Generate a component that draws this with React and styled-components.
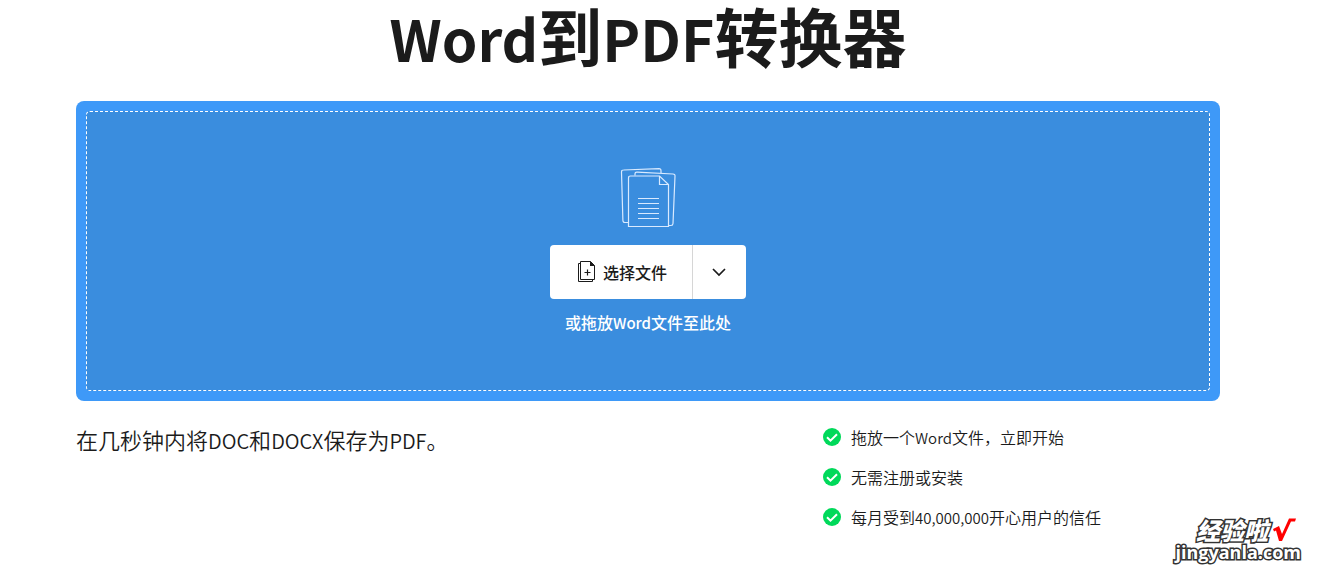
import styled, {createGlobalStyle} from "styled-components";

const GlobalStyle = createGlobalStyle`
	* {
		box-sizing: border-box;
	}

	body {
		margin: 0;
		background: #fff;
		color: #1b1b1b;
		font-family: "Noto Sans CJK SC", "Noto Sans", sans-serif;
	}
`

const Page = styled.main`
	padding: 0 97px 0 76px;
`

const Title = styled.h1`
	margin: 0 0 32px;
	font-size: 64px;
	font-weight: 700;
	line-height: 69px;
	text-align: center;
`

const Latin = styled.span`
	font-size: ${({$size}) => $size}px;
	line-height: 1;
`

const DropZone = styled.section`
	padding: 10px;
	border-radius: 8px;
	background: #3e99f8;
`

const DropArea = styled.div`
	display: flex;
	flex-direction: column;
	align-items: center;
	padding: 56px 16px;
	border: 1px dashed #fff;
	border-radius: 4px;
	background: #3a8dde;
`

const ButtonGroup = styled.div`
	display: flex;
	margin: 17px 0 11px;
	border-radius: 4px;
	background: #fff;
	overflow: hidden;
`

const Button = styled.button`
	display: flex;
	align-items: center;
	justify-content: center;
	gap: 6px;
	height: 54px;
	padding: 0 ${({$compact}) => $compact ? 16 : 25}px;
	border: 0;
	border-left: ${({$compact}) => $compact ? '1px solid #d6d6d6' : '0'};
	background: transparent;
	color: #1b1b1b;
	font-family: inherit;
	font-size: 16px;
	font-weight: 500;
	cursor: pointer;
`

const Hint = styled.p`
	margin: 0;
	color: #fff;
	font-size: 16px;
	font-weight: 500;
	line-height: 24px;
`

const Details = styled.section`
	display: grid;
	grid-template-columns: 747px 1fr;
	padding-top: 24px;
`

const Lead = styled.p`
	margin: 0;
	font-size: 22px;
	font-weight: 350;
	line-height: 28px;
`

const Benefits = styled.ul`
	display: flex;
	flex-direction: column;
	gap: 16px;
	margin: 0;
	padding: 0;
	list-style: none;
`

const Benefit = styled.li`
	display: flex;
	align-items: center;
	gap: 10px;
	font-size: 16px;
	font-weight: 350;
	line-height: 24px;
`

const Watermark = styled.div`
	position: absolute;
	right: 16px;
	bottom: 8px;
	display: flex;
	flex-direction: column;
	align-items: flex-end;
	color: #fff;
	font-weight: 900;
	-webkit-text-stroke: 3px #333;
	paint-order: stroke fill;
`

const WatermarkName = styled.span`
	display: flex;
	align-items: center;
	gap: 4px;
	padding-right: 5px;
	font-size: 24px;
	font-style: italic;
	line-height: 24px;
`

const WatermarkSite = styled.span`
	font-family: "Open Sans", sans-serif;
	font-size: 18px;
	font-weight: 700;
	line-height: 20px;
`

const DocumentsIcon = () => (
	<svg width="56" height="60" viewBox="0 0 56 60" fill="none" stroke="#d9eaff" strokeWidth="1.2" aria-hidden="true">
		<path d="M8.500 54.500H5q-2 0-2.100-2L1.500 4q0-2 2-2L39 .7q2 0 2 2V5"/>
		<path d="M15 7.500V6q.1-2 2-1.900L53 6q2.200.1 2 2l-2 47.500q-.1 2-2 2h-3"/>
		<path d="M39.500 8H10.500q-2 0-2 2v48.500h40V16.500z"/>
		<path d="M39.500 8v8.500h9"/>
		<path d="M18 30.500h21M18 35.500h21M18 40.500h21M18 45.500h21M18 50.500h21" strokeWidth="1.200"/>
	</svg>
)

const AddFileIcon = () => (
	<svg width="22" height="22" viewBox="0 0 22 22" fill="none" stroke="#1b1b1b" strokeWidth="1" aria-hidden="true">
		<path d="M5.500 .5h10l4 4v14H5.500z"/>
		<path d="M5.500 2.500h-2v18h14v-2"/>
		<path d="M15 0v5h5z" fill="#1b1b1b" stroke="none"/>
		<path d="M12.500 8.500v6M9.500 11.500h6" strokeWidth="1.200"/>
	</svg>
)

const ChevronIcon = () => (
	<svg width="21" height="20" viewBox="0 0 21 20" fill="none" stroke="#1b1b1b" strokeWidth="1.700" aria-hidden="true">
		<path d="M4 7l6 6 6-6"/>
	</svg>
)

const CheckIcon = () => (
	<svg width="18" height="18" viewBox="0 0 18 18" fill="none" aria-hidden="true">
		<circle cx="9" cy="9" r="9" fill="#00d95a"/>
		<path d="M4 9.200l3.500 3.500 6.500-6.500" stroke="#fff" strokeWidth="2"/>
	</svg>
)

const RedTick = () => (
	<svg width="24" height="24" viewBox="0 0 24 24" fill="#f00" aria-hidden="true">
		<path d="M1 11l6-3 3 8L17 .5h7l-1 3h-4L10 23H7L4 12.500l-2 1z"/>
	</svg>
)

const App = () => {
	return (
		<>
			<GlobalStyle/>
			<Page>
				<Title>
					<Latin $size={57}>Word</Latin>到<Latin $size={57}>PDF</Latin>转换器
				</Title>
				<DropZone>
					<DropArea>
						<DocumentsIcon/>
						<ButtonGroup>
							<Button type="button">
								<AddFileIcon/>
								选择文件
							</Button>
							<Button type="button" $compact aria-label="更多选项">
								<ChevronIcon/>
							</Button>
						</ButtonGroup>
						<Hint>或拖放<Latin $size={15}>Word</Latin>文件至此处</Hint>
					</DropArea>
				</DropZone>
				<Details>
					<Lead>
						在几秒钟内将<Latin $size={20}>DOC</Latin>和<Latin $size={20}>DOCX</Latin>保存为<Latin $size={20}>PDF</Latin>。
					</Lead>
					<Benefits>
						<Benefit>
							<CheckIcon/>
							<span>拖放一个<Latin $size={15}>Word</Latin>文件，立即开始</span>
						</Benefit>
						<Benefit>
							<CheckIcon/>
							<span>无需注册或安装</span>
						</Benefit>
						<Benefit>
							<CheckIcon/>
							<span>每月受到<Latin $size={15}>40,000,000</Latin>开心用户的信任</span>
						</Benefit>
					</Benefits>
				</Details>
			</Page>
			<Watermark>
				<WatermarkName>经验啦<RedTick/></WatermarkName>
				<WatermarkSite>jingyanla.com</WatermarkSite>
			</Watermark>
		</>
	)
}

export default App
